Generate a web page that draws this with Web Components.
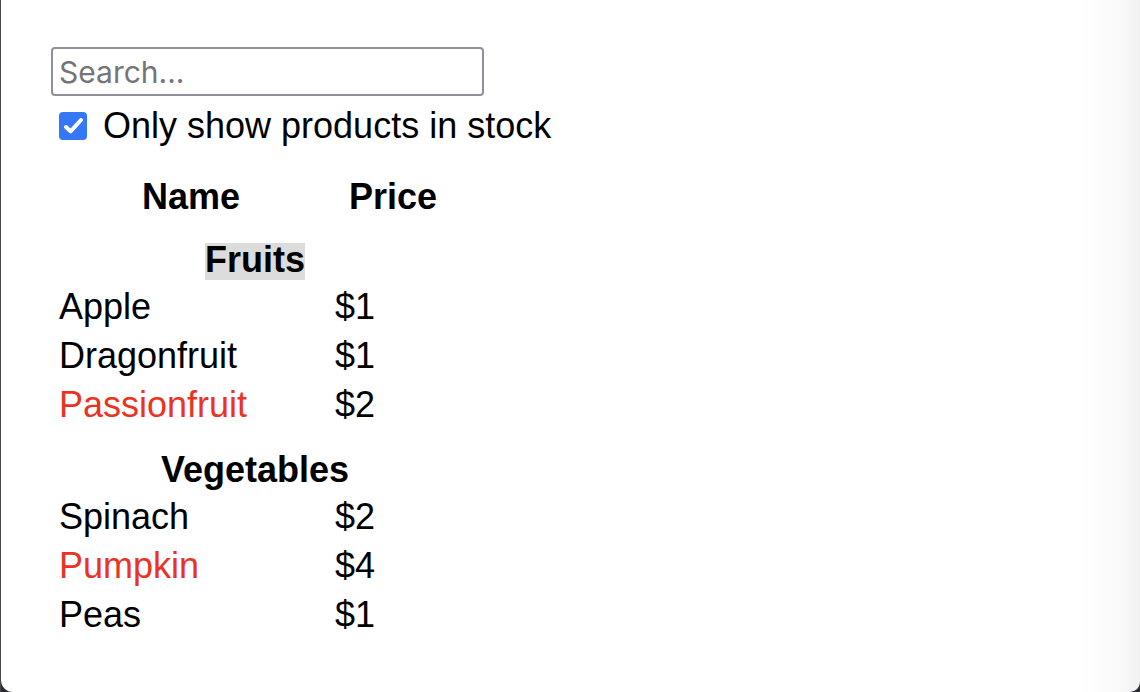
<!DOCTYPE html>
<html lang="en">
<head>
<meta charset="utf-8">
<meta name="viewport" content="width=device-width, initial-scale=1">
<title>Products</title>
<style>
  html { background: #2b2c31; }
  body { margin: 0; font: 36px/41px "Liberation Sans", Arial, sans-serif; color: #000; }
</style>
</head>
<body>
<window-pane>
  <search-bar>Only show products in stock</search-bar>
  <product-table></product-table>
</window-pane>

<template id="window-pane">
  <style>
    :host { display: block; min-height: 100vh; box-sizing: border-box; border-left: 1px solid #46464e; }
    main {
      min-height: 100vh; box-sizing: border-box; padding: 47px 50px;
      display: flex; flex-direction: column; align-items: flex-start; gap: 30px;
      border-radius: 0 0 10px 12px;
      background: linear-gradient(to left, #f1f1f1, #f8f8f8 16px, #fcfcfc 36px, #fff 60px) #fff;
    }
  </style>
  <main><slot></slot></main>
</template>

<template id="search-bar">
  <style>
    :host { display: block; max-width: 100%; }
    form { display: flex; flex-direction: column; align-items: flex-start; gap: 9px; }
    .query {
      box-sizing: border-box; width: 433px; max-width: 100%; height: 49px; margin: 0; padding: 0 6px;
      border: 2px solid #8f8f9d; border-radius: 4px; background: #fff; color: #000;
      font: 30px/36px Inter, sans-serif;
    }
    .query::placeholder { color: #757575; opacity: 1; }
    label { display: flex; align-items: center; gap: 16px; padding-left: 8px; }
    .tick { display: grid; flex: none; width: 28px; height: 28px; }
    .tick > * { grid-area: 1 / 1; }
    input[type=checkbox] {
      appearance: none; width: 28px; height: 28px; margin: 0;
      border: 2px solid #8f8f9d; border-radius: 4px; background: #fff;
    }
    input[type=checkbox]:checked { border: 0; background: #3478f6; }
    svg { width: 28px; height: 28px; pointer-events: none; visibility: hidden; }
    input:checked + svg { visibility: visible; }
  </style>
  <form>
    <input class="query" type="text" placeholder="Search..." aria-label="Search">
    <label>
      <span class="tick">
        <input type="checkbox" checked>
        <svg viewBox="0 0 28 28" fill="none" stroke="#fff" stroke-width="4" stroke-linecap="round" stroke-linejoin="round" aria-hidden="true"><path d="M7 15l4.6 4.4L22 8"/></svg>
      </span>
      <span><slot></slot></span>
    </label>
  </form>
</template>

<template id="product-table">
  <style>
    :host { display: block; margin-left: 8px; }
    table { border-collapse: collapse; table-layout: fixed; width: 392px; }
    th, td { padding: 4px 0; text-align: left; font-weight: 400; }
    th { font-weight: 700; text-align: center; }
    thead th { padding: 0 0 2px; }
    .category th { padding: 20px 0 2px; }
    th.name, td.name { width: 264px; padding-right: 12px; }
    .sold-out { color: #ea3323; }
    mark { color: inherit; background: linear-gradient(#dcdcdc, #dcdcdc) bottom / 100% 37px no-repeat; }
  </style>
  <table>
    <thead><tr><th class="name" scope="col">Name</th><th scope="col">Price</th></tr></thead>
    <tbody></tbody>
  </table>
</template>

<script>
  class TemplateElement extends HTMLElement {
    constructor() {
      super();
      const template = document.getElementById(this.localName);
      this.attachShadow({ mode: 'open' }).append(template.content.cloneNode(true));
    }
  }

  const PRODUCTS = [
    { category: 'Fruits', selected: true, items: [
      { name: 'Apple', price: '$1', stocked: true },
      { name: 'Dragonfruit', price: '$1', stocked: true },
      { name: 'Passionfruit', price: '$2', stocked: false }
    ] },
    { category: 'Vegetables', items: [
      { name: 'Spinach', price: '$2', stocked: true },
      { name: 'Pumpkin', price: '$4', stocked: false },
      { name: 'Peas', price: '$1', stocked: true }
    ] }
  ];

  class ProductTable extends TemplateElement {
    connectedCallback() {
      const title = g => g.selected ? `<mark>${g.category}</mark>` : g.category;
      const row = p => `<tr><td class="name${p.stocked ? '' : ' sold-out'}">${p.name}</td><td>${p.price}</td></tr>`;
      this.shadowRoot.querySelector('tbody').innerHTML = PRODUCTS.map(g =>
        `<tr class="category"><th colspan="2" scope="colgroup">${title(g)}</th></tr>` + g.items.map(row).join('')
      ).join('');
    }
  }

  customElements.define('window-pane', class extends TemplateElement {});
  customElements.define('search-bar', class extends TemplateElement {});
  customElements.define('product-table', ProductTable);
</script>
</body>
</html>
